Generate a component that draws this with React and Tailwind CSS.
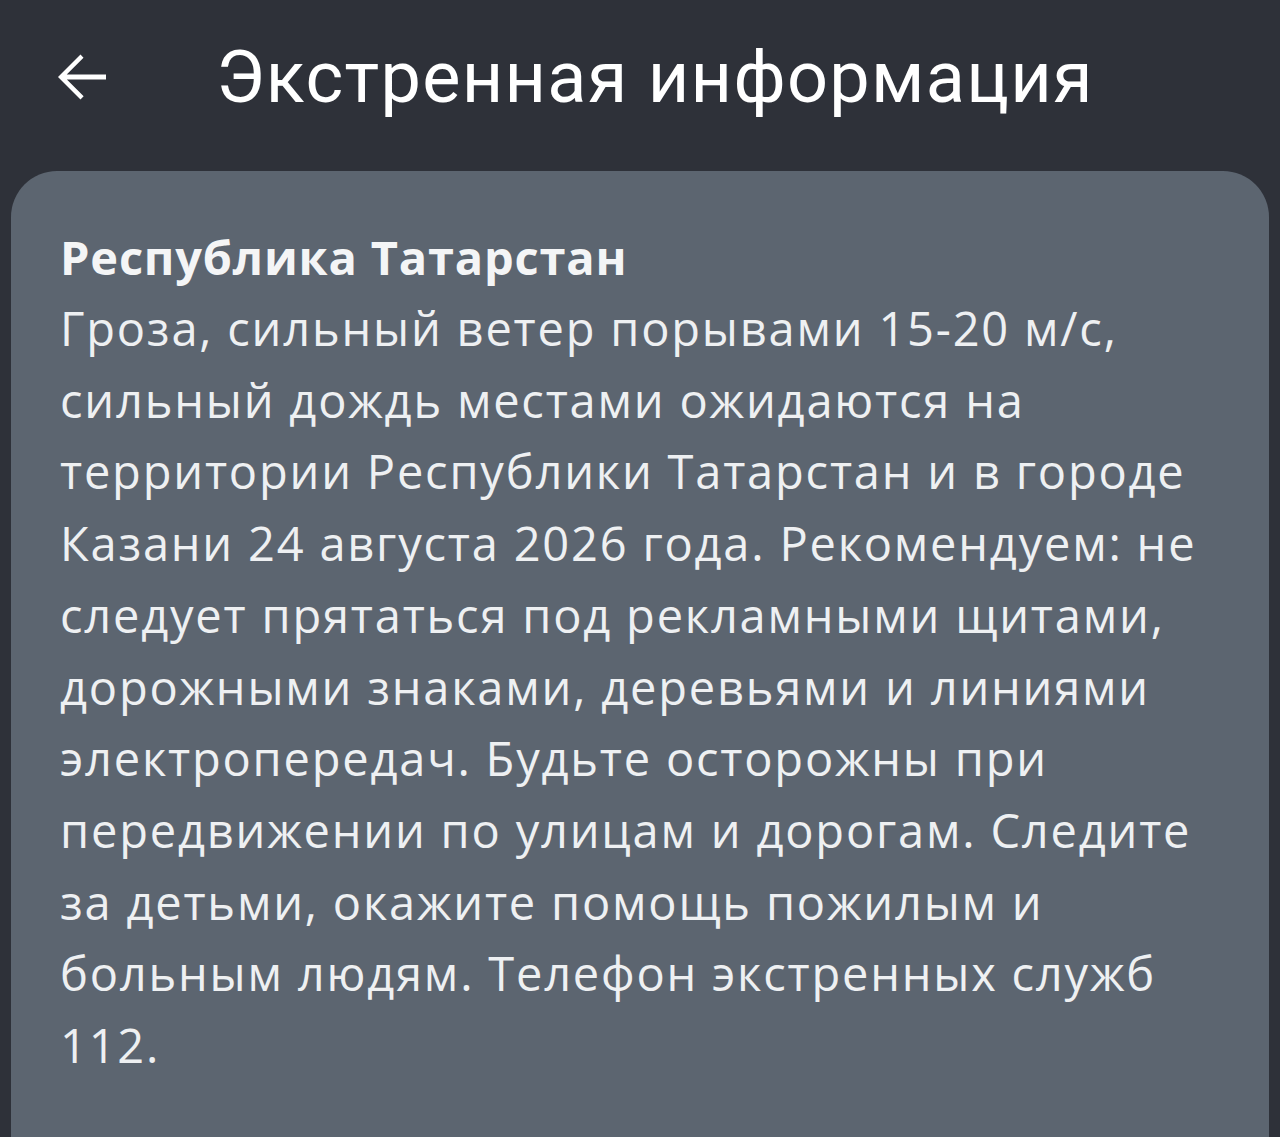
const lines = [
  "Гроза, сильный ветер порывами 15-20 м/с,",
  "сильный дождь местами ожидаются на",
  "территории Республики Татарстан и в городе",
  "Казани 24 августа 2026 года. Рекомендуем: не",
  "следует прятаться под рекламными щитами,",
  "дорожными знаками, деревьями и линиями",
  "электропередач. Будьте осторожны при",
  "передвижении по улицам и дорогам. Следите",
  "за детьми, окажите помощь пожилым и",
  "больным людям. Телефон экстренных служб",
  "112.",
];

function BackArrow() {
  return (
    <svg viewBox="0 0 24 24" className="w-[72px] h-[72px] fill-white shrink-0">
      <path d="M20 11.2H6.9l5.6-5.6L11.5 4.5 4 12l7.5 7.5 1.05-1.05-5.6-5.65H20z" />
    </svg>
  );
}

export default function App() {
  return (
    <main className="w-[1280px] h-[1137px] overflow-hidden bg-[#2e3139] flex flex-col">
      <header className="h-[171px] flex items-start pt-[41px] pl-[46px] shrink-0">
        <BackArrow />
        <h1 className="ml-[98px] -mt-[3px] text-white text-[72px] leading-[80px] tracking-[1.3px] font-['Roboto',sans-serif]">
          Экстренная информация
        </h1>
      </header>
      <section className="flex-1 mx-[11px] rounded-t-[46px] bg-[#5c6570] pl-[49px] pt-[50px] font-['Open_Sans',sans-serif] text-[#f4f5f6]">
        <h2 className="font-bold text-[47px] leading-[72px] tracking-[0.8px]">Республика Татарстан</h2>
        <p className="text-[47px] leading-[71.7px] tracking-[1.8px] text-[#eef0f2]">
          {lines.map((l, i) => (
            <span key={i} className="block whitespace-nowrap">{l}</span>
          ))}
        </p>
      </section>
    </main>
  );
}
